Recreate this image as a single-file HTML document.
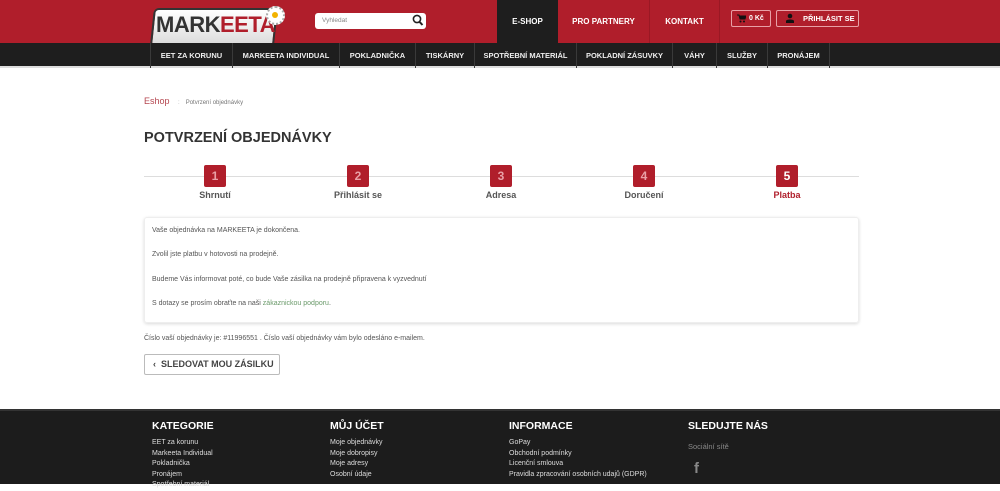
<!DOCTYPE html><html><head><meta charset="utf-8"><style>
*{margin:0;padding:0;box-sizing:border-box}
body{width:1000px;height:484px;overflow:hidden;background:#fff;font-family:"Liberation Sans",sans-serif;position:relative}
.a{position:absolute}
.hdr{left:0;top:0;width:1000px;height:43px;background:#b01e2b}
.nav{left:0;top:43px;width:1000px;height:25px;background:#1e1e1e;border-bottom:2px solid #ddd}
.ni{position:absolute;top:0;height:25px;line-height:25px;color:#eee;font-size:7.5px;font-weight:bold;text-align:center;border-right:1px solid #3a3a3a}
.tn{position:absolute;top:0;height:43px;line-height:43px;color:#fff;font-size:8px;font-weight:bold;text-align:center}
.step{position:absolute;top:165px;width:22px;height:22px;background:#b01e2b;color:#e9a0a7;font-weight:bold;font-size:12px;text-align:center;line-height:22px;border-radius:2px}
.sl{position:absolute;top:190px;width:120px;text-align:center;font-size:9px;font-weight:bold;color:#555}
.p{position:absolute;left:152px;font-size:7px;color:#555}
.fh{position:absolute;top:420px;color:#fff;font-weight:bold;font-size:10.5px}
.fl{position:absolute;color:#ddd;font-size:7px;line-height:10.5px}
</style></head><body>
<div class="a hdr"></div>
<div class="a" style="left:152px;top:8px;width:124px;height:37px;background:linear-gradient(#fff,#ddd);border:2px solid #333;border-radius:5px 5px 0 0;transform:skewX(-6deg)"></div>
<div class="a" style="left:156px;top:12px;font-size:22px;font-weight:bold;color:#333;letter-spacing:-0.5px">MARK<span style="color:#b01e2b">EETA</span></div>
<div class="a" style="left:266px;top:6px;width:19px;height:19px;border-radius:50%;background:#fff;border:2px dotted #aaa"></div>
<div class="a" style="left:272px;top:12px;width:6px;height:6px;border-radius:50%;background:#f2b200"></div>
<div class="a" style="left:315px;top:13px;width:111px;height:16px;background:#fff;border-radius:3px;font-size:6.5px;color:#888;padding:4px 7px">Vyhledat</div>
<svg class="a" style="left:412px;top:14px" width="12" height="13" viewBox="0 0 12 13"><circle cx="5" cy="5" r="3.6" fill="none" stroke="#222" stroke-width="1.6"/><path d="M7.5 7.8L10.5 11" stroke="#222" stroke-width="2"/></svg>
<div class="tn" style="left:497px;width:61px;background:#1e1e1e">E-SHOP</div>
<div class="tn" style="left:558px;width:92px;border-right:1px solid #9a1824">PRO PARTNERY</div>
<div class="tn" style="left:650px;width:70px;border-right:1px solid #9a1824">KONTAKT</div>
<div class="a" style="left:731px;top:10px;width:40px;height:17px;border:1px solid #e8a0a6;border-radius:2px;color:#fff;font-size:7px;font-weight:bold;line-height:15px;padding-left:17px">0 Kč</div>
<svg class="a" style="left:737px;top:14px" width="9" height="9" viewBox="0 0 9 9"><path d="M0 1h2l1 4h5l1-3H2.5" fill="#111" stroke="#111"/><circle cx="3.5" cy="7.5" r="1" fill="#111"/><circle cx="7" cy="7.5" r="1" fill="#111"/></svg>
<div class="a" style="left:776px;top:10px;width:83px;height:17px;border:1px solid #e8a0a6;border-radius:2px;color:#fff;font-size:7.5px;font-weight:bold;line-height:15px;padding-left:26px">PŘIHLÁSIT SE</div>
<svg class="a" style="left:786px;top:13px" width="8" height="10" viewBox="0 0 8 10"><circle cx="4" cy="3" r="2.3" fill="#111"/><path d="M0 10V8c0-2 8-2 8 0v2z" fill="#111"/></svg>
<div class="a nav">
<div class="ni" style="left:150px;width:83px;border-left:1px solid #3a3a3a">EET ZA KORUNU</div>
<div class="ni" style="left:233px;width:107px">MARKEETA INDIVIDUAL</div>
<div class="ni" style="left:340px;width:76px">POKLADNIČKA</div>
<div class="ni" style="left:416px;width:59px">TISKÁRNY</div>
<div class="ni" style="left:475px;width:102px">SPOTŘEBNÍ MATERIÁL</div>
<div class="ni" style="left:577px;width:96px">POKLADNÍ ZÁSUVKY</div>
<div class="ni" style="left:673px;width:44px">VÁHY</div>
<div class="ni" style="left:717px;width:51px">SLUŽBY</div>
<div class="ni" style="left:768px;width:62px">PRONÁJEM</div>
</div>
<div class="a" style="left:144px;top:96px;font-size:9px;color:#b5464f">Eshop <span style="color:#aaa;font-size:6px;margin:0 6px">:</span><span style="color:#777;font-size:6px">Potvrzení objednávky</span></div>
<div class="a" style="left:144px;top:130px;font-size:14.5px;font-weight:bold;color:#333">POTVRZENÍ OBJEDNÁVKY</div>
<div class="a" style="left:144px;top:176px;width:715px;height:1px;background:#ddd"></div>
<div class="step" style="left:204px">1</div><div class="step" style="left:347px">2</div><div class="step" style="left:490px">3</div><div class="step" style="left:633px">4</div><div class="step" style="left:776px;color:#fff">5</div>
<div class="sl" style="left:155px">Shrnutí</div><div class="sl" style="left:298px">Přihlásit se</div><div class="sl" style="left:441px">Adresa</div><div class="sl" style="left:584px">Doručení</div><div class="sl" style="left:727px;color:#b01e2b">Platba</div>
<div class="a" style="left:144px;top:217px;width:715px;height:106px;border:1px solid #eee;border-radius:3px;box-shadow:0 1px 3px rgba(0,0,0,.15)"></div>
<div class="p" style="top:227px">Vaše objednávka na MARKEETA je dokončena.</div>
<div class="p" style="top:251px">Zvolil jste platbu v hotovosti na prodejně.</div>
<div class="p" style="top:276px">Budeme Vás informovat poté, co bude Vaše zásilka na prodejně připravena k vyzvednutí</div>
<div class="p" style="top:300px">S dotazy se prosím obraťte na naši <span style="color:#6a9a6a">zákaznickou podporu</span>.</div>
<div class="p" style="left:144px;top:335px">Číslo vaší objednávky je: #11996551 . Číslo vaší objednávky vám bylo odesláno e-mailem.</div>
<div class="a" style="left:144px;top:354px;width:136px;height:21px;border:1px solid #bbb;border-radius:2px;font-size:9px;font-weight:bold;color:#444;line-height:19px;padding-left:8px">‹&nbsp; SLEDOVAT MOU ZÁSILKU</div>
<div class="a" style="left:0;top:409px;width:1000px;height:75px;background:#1c1c1c;border-top:2px solid #333"></div>
<div class="fh" style="left:152px">KATEGORIE</div><div class="fh" style="left:330px">MŮJ ÚČET</div><div class="fh" style="left:509px">INFORMACE</div><div class="fh" style="left:688px">SLEDUJTE NÁS</div>
<div class="fl" style="left:152px;top:438px">EET za korunu<br>Markeeta Individual<br>Pokladnička<br>Pronájem<br>Spotřební materiál</div>
<div class="fl" style="left:330px;top:438px">Moje objednávky<br>Moje dobropisy<br>Moje adresy<br>Osobní údaje</div>
<div class="fl" style="left:509px;top:438px">GoPay<br>Obchodní podmínky<br>Licenční smlouva<br>Pravidla zpracování osobních udajů (GDPR)</div>
<div class="fl" style="left:688px;top:442px;color:#888;font-size:7.5px">Sociální sítě</div>
<div class="a" style="left:694px;top:460px;color:#888;font-size:15px;font-weight:bold">f</div>
</body></html>
